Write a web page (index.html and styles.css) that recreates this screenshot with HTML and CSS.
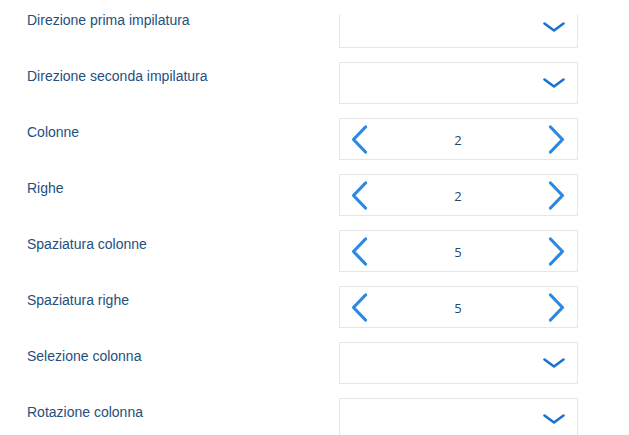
FILE: index.html
```html
<!DOCTYPE html>
<html lang="it">
<head>
<meta charset="utf-8">
<title>Impilatura</title>
<link rel="stylesheet" href="styles.css">
</head>
<body>
<div class="topcover"></div>
<div class="form">
  <div class="row">
    <div class="label">Direzione prima impilatura</div>
    <div class="field select"><svg class="down" width="22" height="10" viewBox="0 0 22 10"><polyline points="1.5,1.5 11,8.5 20.5,1.5"/></svg></div>
  </div>
  <div class="row">
    <div class="label">Direzione seconda impilatura</div>
    <div class="field select"><svg class="down" width="22" height="10" viewBox="0 0 22 10"><polyline points="1.5,1.5 11,8.5 20.5,1.5"/></svg></div>
  </div>
  <div class="row">
    <div class="label">Colonne</div>
    <div class="field stepper">
      <svg class="arrow" width="17" height="29" viewBox="0 0 17 29"><polyline points="14.5,2 2.5,14.5 14.5,27"/></svg>
      <span class="value">2</span>
      <svg class="arrow" width="17" height="29" viewBox="0 0 17 29"><polyline points="2.5,2 14.5,14.5 2.5,27"/></svg>
    </div>
  </div>
  <div class="row">
    <div class="label">Righe</div>
    <div class="field stepper">
      <svg class="arrow" width="17" height="29" viewBox="0 0 17 29"><polyline points="14.5,2 2.5,14.5 14.5,27"/></svg>
      <span class="value">2</span>
      <svg class="arrow" width="17" height="29" viewBox="0 0 17 29"><polyline points="2.5,2 14.5,14.5 2.5,27"/></svg>
    </div>
  </div>
  <div class="row">
    <div class="label">Spaziatura colonne</div>
    <div class="field stepper">
      <svg class="arrow" width="17" height="29" viewBox="0 0 17 29"><polyline points="14.5,2 2.5,14.5 14.5,27"/></svg>
      <span class="value">5</span>
      <svg class="arrow" width="17" height="29" viewBox="0 0 17 29"><polyline points="2.5,2 14.5,14.5 2.5,27"/></svg>
    </div>
  </div>
  <div class="row">
    <div class="label">Spaziatura righe</div>
    <div class="field stepper">
      <svg class="arrow" width="17" height="29" viewBox="0 0 17 29"><polyline points="14.5,2 2.5,14.5 14.5,27"/></svg>
      <span class="value">5</span>
      <svg class="arrow" width="17" height="29" viewBox="0 0 17 29"><polyline points="2.5,2 14.5,14.5 2.5,27"/></svg>
    </div>
  </div>
  <div class="row">
    <div class="label">Selezione colonna</div>
    <div class="field select"><svg class="down" width="22" height="10" viewBox="0 0 22 10"><polyline points="1.5,1.5 11,8.5 20.5,1.5"/></svg></div>
  </div>
  <div class="row">
    <div class="label">Rotazione colonna</div>
    <div class="field select"><svg class="down" width="22" height="10" viewBox="0 0 22 10"><polyline points="1.5,1.5 11,8.5 20.5,1.5"/></svg></div>
  </div>
</div>
</body>
</html>
```
FILE: styles.css
```css
html, body {
  margin: 0;
  padding: 0;
  background: #ffffff;
  overflow: hidden;
}
body {
  width: 629px;
  height: 435px;
  position: relative;
  font-family: "Liberation Sans", Arial, sans-serif;
}
.topcover {
  position: absolute;
  left: 0;
  top: 0;
  width: 629px;
  height: 14px;
  background: #ffffff;
  z-index: 2;
}
.form {
  display: flex;
  flex-direction: column;
  gap: 14px;
  padding: 6px 0 0 27px;
}
.row {
  display: grid;
  grid-template-columns: 312px 239px;
  align-items: start;
}
.label {
  font-size: 14px;
  line-height: 16px;
  color: #23507d;
  padding-top: 6px;
}
.field {
  box-sizing: border-box;
  height: 42px;
  border: 1px solid #e6e6e6;
  background: #ffffff;
  display: flex;
  align-items: center;
}
.select {
  justify-content: flex-end;
  padding-right: 12px;
}
.stepper {
  justify-content: space-between;
  padding: 0 12px 0 11px;
}
.value {
  font-family: "Open Sans", "Noto Sans", sans-serif;
  font-size: 13px;
  color: #1f4a75;
  line-height: 16px;
  padding-top: 1px;
}
svg polyline {
  fill: none;
  stroke-linecap: round;
  stroke-linejoin: round;
}
.down polyline {
  stroke: #1a72d2;
  stroke-width: 2.6;
}
.arrow polyline {
  stroke: #2c88e0;
  stroke-width: 3.2;
}
```
